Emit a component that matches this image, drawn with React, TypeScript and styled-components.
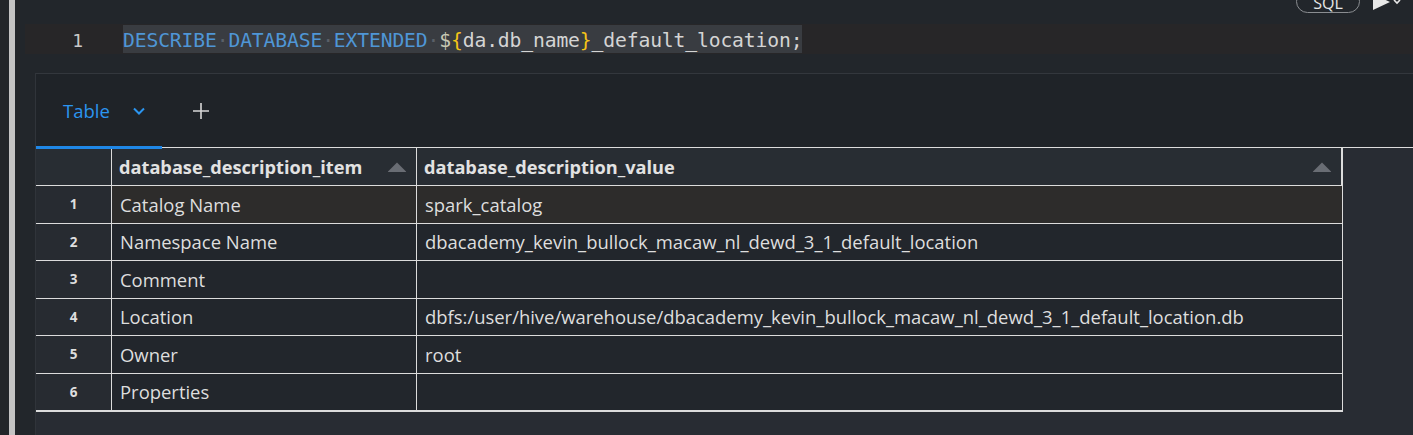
import React from "react";
import styled, { createGlobalStyle } from "styled-components";

const Global = createGlobalStyle`
  html, body { margin: 0; padding: 0; background: #22262b; overflow: hidden; }
  #root { width: 1413px; height: 435px; }
`;

const Page = styled.div`
  display: flex;
  width: 1413px;
  height: 435px;
  background: #22262b;
  overflow: hidden;
`;

const EdgeStrip = styled.div`
  width: 9px;
  flex: none;
  background: #222529;
`;

const ScrollBar = styled.div`
  width: 6px;
  flex: none;
  background: #c4c4c4;
`;

const Main = styled.div`
  flex: 1;
  display: flex;
  flex-direction: column;
  min-width: 0;
  position: relative;
`;

const Editor = styled.div`
  height: 73px;
  padding-top: 24px;
  box-sizing: border-box;
  background: #22262b;
`;

const CodeLine = styled.div`
  display: flex;
  align-items: center;
  height: 30px;
  margin-left: 10px;
  background: #272628;
  font-family: "DejaVu Sans Mono", "Liberation Mono", monospace;
  font-size: 19.7px;
  white-space: pre;
`;

const LineNo = styled.span`
  width: 98px;
  flex: none;
  text-align: right;
  padding-right: 40px;
  padding-top: 3px;
  box-sizing: border-box;
  color: #c9c9c9;
  font-size: 18px;
`;

const Selected = styled.span`
  background: #393c41;
  height: 28px;
  line-height: 31px;
  display: inline-block;
  letter-spacing: -0.14px;
`;

const Tok = styled.span<{ $c: string }>`
  color: ${(p) => p.$c};
`;

const TopControls = styled.div`
  position: absolute;
  top: -10px;
  right: 11px;
  display: flex;
  align-items: center;
  gap: 12px;
`;

const Pill = styled.div`
  width: 64px;
  height: 23px;
  border: 1px solid #8a8d91;
  border-radius: 12px;
  box-sizing: border-box;
  display: flex;
  align-items: flex-end;
  justify-content: center;
  color: #e6e6e6;
  font-family: "Open Sans", "Noto Sans", sans-serif;
  font-size: 16px;
  line-height: 18px;
`;

const Results = styled.div`
  flex: 1;
  display: flex;
  flex-direction: column;
  margin-left: 20px;
  border-top: 1px solid #33373d;
  border-left: 1px solid #30343a;
  background: #1f2328;
`;

const TabBar = styled.div`
  height: 73px;
  display: flex;
  align-items: stretch;
  border-bottom: 1px solid #dcdcdc;
  position: relative;
`;

const Tab = styled.div`
  width: 126px;
  display: flex;
  align-items: center;
  gap: 22px;
  padding-left: 27px;
  box-sizing: border-box;
  color: #2b95f0;
  font-family: "Open Sans", "Noto Sans", sans-serif;
  font-size: 18.5px;
  position: relative;
  &::after {
    content: "";
    position: absolute;
    left: 0;
    right: 0;
    bottom: -2px;
    height: 3px;
    background: #1f87e6;
  }
`;

const AddTab = styled.div`
  display: flex;
  align-items: center;
  padding-left: 30px;
  color: #d8d8d8;
`;

const TableArea = styled.div`
  flex: 1;
  display: flex;
  background: #282c33;
`;

const Grid = styled.div`
  display: grid;
  grid-template-columns: 76px 305px 925px;
  align-self: flex-start;
  border-right: 1px solid #dcdcdc;
  border-bottom: 1px solid #dcdcdc;
  font-family: "Open Sans", "Noto Sans", sans-serif;
`;

const HeadCell = styled.div`
  height: 38px;
  box-sizing: border-box;
  background: #282d33;
  border-right: 1px solid #dcdcdc;
  border-bottom: 1px solid #dcdcdc;
  display: flex;
  align-items: center;
  justify-content: space-between;
  padding: 0 8px 0 7px;
  color: #e2e2e2;
  font-weight: 700;
  font-size: 18.2px;
  white-space: nowrap;
`;

const IndexCell = styled.div`
  height: 37.5px;
  box-sizing: border-box;
  background: #272b31;
  border-right: 1px solid #dcdcdc;
  border-bottom: 1px solid #dcdcdc;
  display: flex;
  align-items: center;
  justify-content: center;
  color: #dedede;
  font-weight: 700;
  font-size: 13.5px;
`;

const Cell = styled.div<{ $hl?: boolean; $last?: boolean }>`
  height: 37.5px;
  box-sizing: border-box;
  background: ${(p) => (p.$hl ? "#2d2c2b" : "#22262c")};
  border-right: ${(p) => (p.$last ? "none" : "1px solid #dcdcdc")};
  border-bottom: 1px solid #dcdcdc;
  display: flex;
  align-items: center;
  padding-left: 8px;
  color: #dedede;
  font-size: 18.45px;
  white-space: nowrap;
`;

const SortUp = () => (
  <svg width="22" height="12" viewBox="0 0 22 12">
    <path d="M11 1.5 L20 10.5 Q20.5 11 19.5 11 L2.5 11 Q1.5 11 2 10.5 Z" fill="#696d74" />
  </svg>
);

const Chevron = () => (
  <svg width="14" height="10" viewBox="0 0 14 10">
    <path d="M2 2.5 L7 7.5 L12 2.5" stroke="#2b95f0" strokeWidth="2" fill="none" />
  </svg>
);

const Plus = () => (
  <svg width="18" height="18" viewBox="0 0 18 18">
    <path d="M9 1 V17 M1 9 H17" stroke="#d8d8d8" strokeWidth="1.6" />
  </svg>
);

const Play = () => (
  <svg width="30" height="16" viewBox="0 0 30 16">
    <path d="M1 0 L18 8 L1 16 Z" fill="#e8e8e8" />
    <path d="M22 6 L25 9 L28 6" stroke="#e8e8e8" strokeWidth="1.6" fill="none" />
  </svg>
);

const rows: [string, string][] = [
  ["Catalog Name", "spark_catalog"],
  ["Namespace Name", "dbacademy_kevin_bullock_macaw_nl_dewd_3_1_default_location"],
  ["Comment", ""],
  ["Location", "dbfs:/user/hive/warehouse/dbacademy_kevin_bullock_macaw_nl_dewd_3_1_default_location.db"],
  ["Owner", "root"],
  ["Properties", ""],
];

const KW = "#4f96d6";
const DOT = "#5a6068";
const ID = "#d4d4d4";

export default function App() {
  return (
    <>
      <Global />
      <Page>
        <EdgeStrip />
        <ScrollBar />
        <Main>
          <TopControls>
            <Pill>SQL</Pill>
            <Play />
          </TopControls>
          <Editor>
            <CodeLine>
              <LineNo>1</LineNo>
              <Selected>
                <Tok $c={KW}>DESCRIBE</Tok>
                <Tok $c={DOT}>·</Tok>
                <Tok $c={KW}>DATABASE</Tok>
                <Tok $c={DOT}>·</Tok>
                <Tok $c={KW}>EXTENDED</Tok>
                <Tok $c={DOT}>·</Tok>
                <Tok $c="#c8c8b4">$</Tok>
                <Tok $c="#f5c518">{"{"}</Tok>
                <Tok $c={ID}>da.db_name</Tok>
                <Tok $c="#f5c518">{"}"}</Tok>
                <Tok $c={ID}>_default_location;</Tok>
              </Selected>
            </CodeLine>
          </Editor>
          <Results>
            <TabBar>
              <Tab>
                Table
                <Chevron />
              </Tab>
              <AddTab>
                <Plus />
              </AddTab>
            </TabBar>
            <TableArea>
              <Grid>
                <HeadCell />
                <HeadCell>
                  database_description_item
                  <SortUp />
                </HeadCell>
                <HeadCell>
                  database_description_value
                  <SortUp />
                </HeadCell>
                {rows.map(([a, b], i) => (
                  <React.Fragment key={a}>
                    <IndexCell>{i + 1}</IndexCell>
                    <Cell $hl={i === 0}>{a}</Cell>
                    <Cell $hl={i === 0} $last>
                      {b}
                    </Cell>
                  </React.Fragment>
                ))}
              </Grid>
            </TableArea>
          </Results>
        </Main>
      </Page>
    </>
  );
}
